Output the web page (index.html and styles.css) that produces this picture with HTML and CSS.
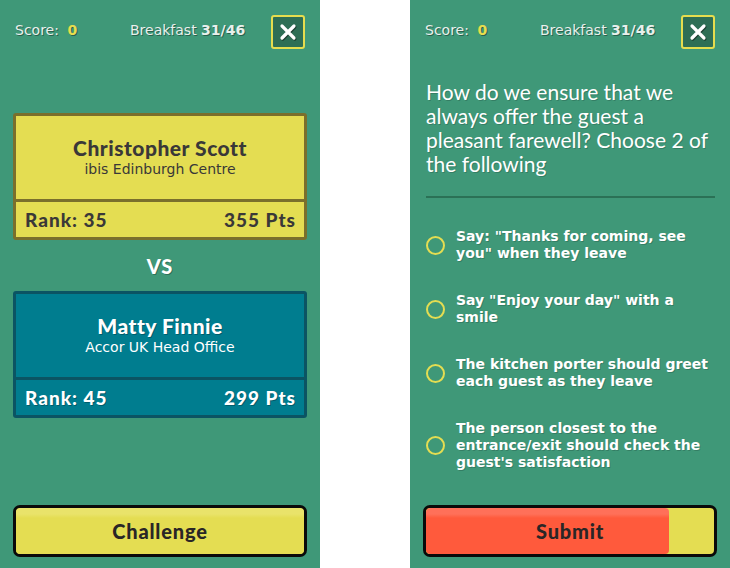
FILE: index.html
```html
<!DOCTYPE html>
<html>
<head>
<meta charset="utf-8">
<link rel="stylesheet" href="styles.css">
</head>
<body>
<div class="screens">
  <section class="panel">
    <header class="topbar">
      <div class="score">Score: <b>0</b></div>
      <div class="progress">Breakfast <b>31/46</b></div>
      <button class="close" aria-label="Close">
        <svg width="18" height="18" viewBox="0 0 18 18"><path d="M3 3 L15 15 M15 3 L3 15" stroke="#1d3d30" stroke-width="3.2" stroke-linecap="round" transform="translate(0.8,1)"/><path d="M3 3 L15 15 M15 3 L3 15" stroke="#fff" stroke-width="3.2" stroke-linecap="round"/></svg>
      </button>
    </header>
    <div class="versus">
      <div class="card card-yellow">
        <div class="card-main">
          <div class="name">Christopher Scott</div>
          <div class="org">ibis Edinburgh Centre</div>
        </div>
        <div class="card-foot"><span>Rank: 35</span><span>355 Pts</span></div>
      </div>
      <div class="vs">VS</div>
      <div class="card card-blue">
        <div class="card-main">
          <div class="name">Matty Finnie</div>
          <div class="org">Accor UK Head Office</div>
        </div>
        <div class="card-foot"><span>Rank: 45</span><span>299 Pts</span></div>
      </div>
    </div>
    <button class="bigbtn"><span class="btnfill" style="width:100%"></span><span class="btnlabel">Challenge</span></button>
  </section>

  <section class="panel">
    <header class="topbar">
      <div class="score">Score: <b>0</b></div>
      <div class="progress">Breakfast <b>31/46</b></div>
      <button class="close" aria-label="Close">
        <svg width="18" height="18" viewBox="0 0 18 18"><path d="M3 3 L15 15 M15 3 L3 15" stroke="#1d3d30" stroke-width="3.2" stroke-linecap="round" transform="translate(0.8,1)"/><path d="M3 3 L15 15 M15 3 L3 15" stroke="#fff" stroke-width="3.2" stroke-linecap="round"/></svg>
      </button>
    </header>
    <div class="quiz">
      <h1 class="question">How do we ensure that we always offer the guest a pleasant farewell? Choose 2 of the following</h1>
      <hr class="rule">
      <ul class="options">
        <li class="opt"><span class="radio"></span><span class="opt-text">Say: "Thanks for coming, see you" when they leave</span></li>
        <li class="opt"><span class="radio"></span><span class="opt-text">Say "Enjoy your day" with a smile</span></li>
        <li class="opt"><span class="radio"></span><span class="opt-text">The kitchen porter should greet each guest as they leave</span></li>
        <li class="opt"><span class="radio"></span><span class="opt-text">The person closest to the entrance/exit should check the guest's satisfaction</span></li>
      </ul>
    </div>
    <button class="bigbtn"><span class="btnfill red" style="width:84.5%"></span><span class="btnlabel">Submit</span></button>
  </section>
</div>
</body>
</html>
```

FILE: styles.css
```css
* { box-sizing: border-box; }
html, body { margin: 0; padding: 0; background: #fff; }
body { font-family: "Lato", "Open Sans", sans-serif; }

.screens { display: flex; gap: 90px; width: 730px; height: 568px; }

.panel {
  width: 320px;
  height: 568px;
  background: #3f9878;
  display: flex;
  flex-direction: column;
  padding: 0 13px 11px 13px;
}

.topbar {
  display: flex;
  align-items: center;
  height: 63px;
  color: #e8f0ec;
  font-family: "DejaVu Sans", sans-serif;
  font-size: 14px;
  text-shadow: 1px 1px 0 rgba(20, 50, 40, 0.55);
}
.score { padding-left: 2px; width: 117px; margin-top: -3px; }
.score b { color: #e6dd4e; margin-left: 4px; font-weight: 700; }
.progress { flex: 1; margin-top: -3px; }
.progress b { font-weight: 700; }

.close {
  width: 34px;
  height: 34px;
  margin-right: 2px;
  background: #2e6e55;
  border: 2px solid #e6dd4e;
  border-radius: 3px;
  display: flex;
  align-items: center;
  justify-content: center;
  padding: 0;
}

.versus { display: flex; flex-direction: column; padding-top: 50px; flex: 1; }

.card {
  border: 3px solid;
  border-radius: 3px;
  height: 127px;
  display: flex;
  flex-direction: column;
}
.card-yellow { background: #e4dd52; border-color: #7a6f2c; color: #3a3838; }
.card-blue { background: #007d8f; border-color: #0b5463; color: #fff; }

.card-main {
  flex: 1;
  display: flex;
  flex-direction: column;
  align-items: center;
  justify-content: center;
  padding-bottom: 2px;
}
.name { font-size: 21px; font-weight: 900; line-height: 24px; letter-spacing: 0.5px; }
.org {
  font-family: "DejaVu Sans", sans-serif;
  font-size: 14px;
  line-height: 17px;
  margin-top: 1px;
}
.card-blue .name, .card-blue .card-foot { text-shadow: 1px 1px 0 rgba(0, 40, 50, 0.4); }

.card-foot {
  height: 38px;
  border-top: 3px solid;
  border-color: inherit;
  display: flex;
  align-items: center;
  justify-content: space-between;
  padding: 0 8px 0 9px;
  font-size: 19px;
  font-weight: 900;
  letter-spacing: 1px;
}

.vs {
  height: 51px;
  display: flex;
  align-items: center;
  justify-content: center;
  color: #fff;
  font-size: 20px;
  font-weight: 900;
  letter-spacing: 1px;
  text-shadow: 1px 1px 0 rgba(20, 50, 40, 0.4);
}

.bigbtn {
  position: relative;
  height: 52px;
  width: 294px;
  border: 3px solid #0a0a0a;
  border-radius: 7px;
  background: #e4dd52;
  padding: 0;
  overflow: hidden;
  font-family: inherit;
}
.btnfill {
  position: absolute;
  left: 0; top: 0; bottom: 0;
  background: linear-gradient(#e9e36a 0, #e9e36a 6px, #e4dd52 10px);
  border-radius: 4px;
}
.btnfill.red { background: linear-gradient(#ff7059 0, #ff7059 6px, #ff5a3c 10px); }
.btnlabel {
  position: relative;
  font-size: 20px;
  font-weight: 900;
  letter-spacing: 0.8px;
  color: #2a2626;
}

.quiz { flex: 1; display: flex; flex-direction: column; }
.question {
  margin: 17px 0 0 3px;
  color: #fff;
  font-size: 21px;
  font-weight: 400;
  line-height: 24px;
  text-shadow: 1px 1px 0 rgba(20, 50, 40, 0.25);
}
.rule { margin: 20px 2px 0 3px; border: 0; height: 2px; background: #2b7156; }

.options { list-style: none; margin: 30px 0 0 0; padding: 0; display: flex; flex-direction: column; gap: 30px; }
.opt { display: flex; align-items: center; gap: 11px; padding-left: 3px; }
.radio {
  flex: none;
  width: 19px; height: 19px;
  border: 2px solid #e4dd52;
  border-radius: 50%;
}
.opt-text {
  color: #fff;
  font-family: "DejaVu Sans", sans-serif;
  font-size: 14px;
  font-weight: 700;
  line-height: 17px;
  padding-right: 2px;
  text-shadow: 1px 1px 0 rgba(20, 50, 40, 0.25);
}
```
